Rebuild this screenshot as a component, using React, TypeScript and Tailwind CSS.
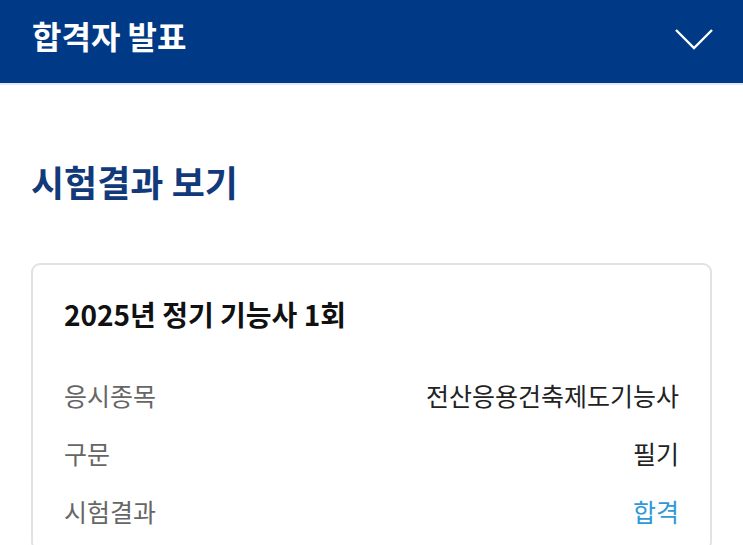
const rows = [
  { label: "응시종목", value: "전산응용건축제도기능사", pass: false },
  { label: "구문", value: "필기", pass: false },
  { label: "시험결과", value: "합격", pass: true },
];

export default function App() {
  return (
    <div
      className="min-h-screen bg-white"
      style={{ fontFamily: '"Noto Sans CJK KR", "Noto Sans", sans-serif' }}
    >
      {/* Header */}
      <div className="flex h-[85px] items-center justify-between border-b-2 border-[#dfe9f7] bg-[#003a87] pl-[32px] pr-[29px]">
        <h1 className="-mt-[14px] text-[32px] font-bold leading-none text-white">합격자 발표</h1>
        <svg
          width="40"
          height="22"
          viewBox="0 0 40 22"
          fill="none"
          stroke="white"
          strokeWidth="2.4"
          className="-mt-[6px]"
        >
          <path d="M2 2 L20 20 L38 2" />
        </svg>
      </div>

      <div className="px-[31px] pt-[78px]">
        <h2 className="text-[36px] font-bold leading-none text-[#123a7a]">시험결과 보기</h2>

        <div className="mt-[64px] rounded-[9px] border-2 border-[#e2e2e2] px-[31px] pt-[31px] pb-[20px]">
          <h3 className="text-[28px] font-bold leading-[36px] text-[#111]">2025년 정기 기능사 1회</h3>
          <div className="mt-[46px] flex flex-col gap-[23px]">
            {rows.map((row) => (
              <div key={row.label} className="flex items-center justify-between text-[25px] leading-[35px]">
                <span className="text-[#666]">{row.label}</span>
                <span className={row.pass ? "text-[#2f98d8]" : "text-[#222]"}>{row.value}</span>
              </div>
            ))}
          </div>
        </div>
      </div>
    </div>
  );
}
